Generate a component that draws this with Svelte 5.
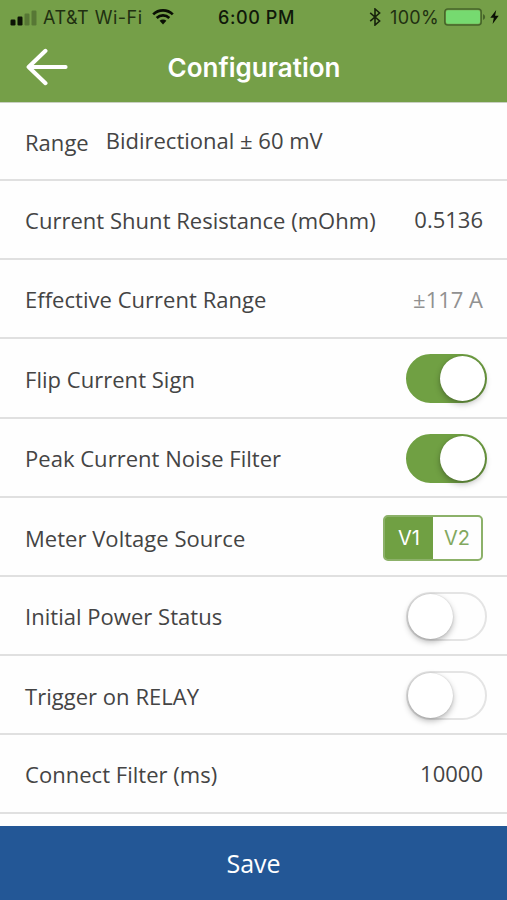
<script>
  let rows = $state([
    { label: 'Range', kind: 'inline', value: 'Bidirectional ± 60 mV' },
    { label: 'Current Shunt Resistance (mOhm)', kind: 'value', value: '0.5136' },
    { label: 'Effective Current Range', kind: 'readonly', value: '±117 A' },
    { label: 'Flip Current Sign', kind: 'switch', on: true },
    { label: 'Peak Current Noise Filter', kind: 'switch', on: true },
    { label: 'Meter Voltage Source', kind: 'segment', options: ['V1', 'V2'], selected: 'V1' },
    { label: 'Initial Power Status', kind: 'switch', on: false },
    { label: 'Trigger on RELAY', kind: 'switch', on: false },
    { label: 'Connect Filter (ms)', kind: 'value', value: '10000' },
  ]);
</script>

<div class="screen">
  <header>
    <div class="status">
      <div class="carrier">
        <svg class="bars" width="27" height="17" viewBox="0 0 27 17">
          <rect x="0.5" y="10.5" width="5" height="6" rx="1.2" />
          <rect x="7.5" y="7.5" width="5" height="9" rx="1.2" />
          <rect x="14.5" y="4.5" width="5" height="12" rx="1.2" opacity="0.28" />
          <rect x="21.5" y="1.5" width="5" height="15" rx="1.2" opacity="0.28" />
        </svg>
        <span class="network">AT&amp;T Wi-Fi</span>
        <svg class="wifi" width="22" height="16" viewBox="0 0 22 16">
          <path d="M1.2 5.4a14 14 0 0 1 19.6 0" />
          <path d="M4.7 9a9 9 0 0 1 12.6 0" />
          <path class="dot" d="M7.6 11.8a4.9 4.9 0 0 1 6.8 0L11 15.4z" />
        </svg>
      </div>
      <span class="clock">6:00 PM</span>
      <div class="power">
        <svg class="bluetooth" width="12" height="18" viewBox="0 0 12 18">
          <path d="M1.2 4.8l9.4 8.2L6 17V1l4.6 4L1.2 13.2" />
        </svg>
        <span class="percent">100%</span>
        <svg class="battery" width="42" height="18" viewBox="0 0 42 18">
          <rect class="shell" x="0.8" y="0.9" width="36.4" height="16.2" rx="3" />
          <rect class="charge" x="2" y="2.2" width="34" height="13.6" rx="1.8" />
          <path class="cap" d="M39 6v6q2.2-.9 2.2-3T39 6z" />
        </svg>
        <svg class="bolt" width="9" height="14" viewBox="0 0 9 14">
          <path d="M6.2 0L.3 7.8h3.5L2.6 14 8.7 5.7H5.1z" />
        </svg>
      </div>
    </div>
    <div class="nav">
      <button class="back" aria-label="Back">
        <svg width="42" height="38" viewBox="0 0 42 38">
          <path d="M19.5 2.8L2.6 19l16.9 16.2M2.6 19h37" />
        </svg>
      </button>
      <h1>Configuration</h1>
    </div>
  </header>

  <main>
    {#each rows as row}
      <div class="row {row.kind}">
        <span class="label">{row.label}</span>
        {#if row.kind === 'inline'}
          <span class="choice">{row.value}</span>
        {:else if row.kind === 'switch'}
          <button
            class="toggle"
            class:on={row.on}
            role="switch"
            aria-checked={row.on}
            aria-label={row.label}
            onclick={() => (row.on = !row.on)}
          >
            <span class="knob"></span>
          </button>
        {:else if row.kind === 'segment'}
          <div class="options">
            {#each row.options as option}
              <button class:active={row.selected === option} onclick={() => (row.selected = option)}>{option}</button>
            {/each}
          </div>
        {:else}
          <span class="amount">{row.value}</span>
        {/if}
      </div>
    {/each}
  </main>

  <button class="save">Save</button>
</div>

<style>
  :global(body) {
    margin: 0;
    background: #fff;
  }
  .screen {
    display: flex;
    flex-direction: column;
    width: 507px;
    height: 900px;
    overflow: hidden;
    background: #fefefe;
    font-family: 'Open Sans', 'Noto Sans', sans-serif;
    color: #444;
  }
  button {
    margin: 0;
    padding: 0;
    border: 0;
    background: none;
    font: inherit;
    color: inherit;
  }
  svg {
    display: block;
    flex: none;
  }

  header {
    flex: none;
    height: 102px;
    background: #759f48;
  }
  .status {
    display: grid;
    grid-template-columns: 1fr auto 1fr;
    align-items: center;
    height: 34px;
    padding: 0 8px 0 10px;
    font-family: Inter, 'Liberation Sans', sans-serif;
    font-size: 18px;
    color: #213011;
  }
  .carrier,
  .power {
    display: flex;
    align-items: center;
  }
  .power {
    justify-content: flex-end;
  }
  .bars {
    margin-right: 6px;
    fill: #0c1205;
  }
  .network {
    letter-spacing: 0.5px;
  }
  .wifi {
    margin-left: 9px;
    fill: none;
    stroke: #0a0f04;
    stroke-width: 2.7;
  }
  .wifi .dot {
    fill: #0a0f04;
    stroke: none;
  }
  .clock {
    margin-left: 4px;
    font-weight: 500;
    letter-spacing: 0.6px;
    color: #10180a;
  }
  .bluetooth {
    margin-right: 9px;
    fill: none;
    stroke: #17220c;
    stroke-width: 1.6;
  }
  .percent {
    letter-spacing: 0.3px;
  }
  .battery {
    margin: 0 4px 0 5px;
  }
  .shell {
    fill: none;
    stroke: #46652a;
    stroke-width: 1.5;
  }
  .charge {
    fill: #76da70;
  }
  .cap {
    fill: #46652a;
  }
  .bolt {
    fill: #0a0f04;
  }
  .nav {
    display: grid;
    grid-template-columns: 70px 1fr 70px;
    align-items: center;
    height: 66px;
  }
  .back {
    padding-left: 26px;
  }
  .back path {
    fill: none;
    stroke: #fff;
    stroke-width: 4;
    stroke-linecap: round;
    stroke-linejoin: round;
  }
  h1 {
    margin: 2px 0 0 1px;
    text-align: center;
    font-family: Inter, 'Liberation Sans', sans-serif;
    font-size: 26px;
    font-weight: 600;
    line-height: 34px;
    color: #fff;
  }

  main {
    flex: 1;
    min-height: 0;
    overflow: hidden;
    box-shadow: inset 0 1px #c9d0c2;
  }
  .row {
    display: flex;
    align-items: center;
    box-sizing: border-box;
    height: 79.15px;
    padding: 0 24px 0 25px;
    border-bottom: 2px solid #e0e0e0;
    font-size: 22px;
    line-height: 30px;
    white-space: nowrap;
  }
  .row.inline,
  .row.switch {
    padding-top: 2px;
  }
  .row.segment {
    padding-top: 4px;
  }
  .label {
    letter-spacing: 0.03px;
  }
  .choice {
    margin: -3px 0 0 17px;
  }
  .amount {
    margin: -2px 0 0 auto;
  }
  .readonly .amount {
    margin-top: 1px;
    color: #919191;
  }
  .toggle {
    box-sizing: border-box;
    width: 81px;
    height: 49px;
    margin: 0 -4px 0 auto;
    padding: 0;
    border: 2px solid #e4e4e4;
    border-radius: 25px;
    background: #fefefe;
  }
  .toggle.on {
    padding-left: 32px;
    border-color: #70a043;
    background: #70a043;
  }
  .knob {
    display: block;
    width: 45px;
    height: 45px;
    border-radius: 50%;
    background: #fff;
    box-shadow: 0 3px 6px rgba(0, 0, 0, 0.28), 0 0 2px rgba(0, 0, 0, 0.16);
  }
  .options {
    display: flex;
    box-sizing: border-box;
    width: 100px;
    height: 46px;
    margin-left: auto;
    overflow: hidden;
    border: 2px solid #8cb169;
    border-radius: 5px;
  }
  .options button {
    flex: 1;
    font-family: Inter, 'Liberation Sans', sans-serif;
    font-size: 20px;
    color: #82a85f;
  }
  .options .active {
    background: #70a043;
    /* covers the outline on the selected side */
    box-shadow: 0 0 0 2px #70a043;
    clip-path: inset(-2px 0 -2px -2px);
    color: #fff;
  }

  .save {
    flex: none;
    height: 74px;
    background: #235796;
    font-size: 25px;
    color: #fff;
  }
</style>
